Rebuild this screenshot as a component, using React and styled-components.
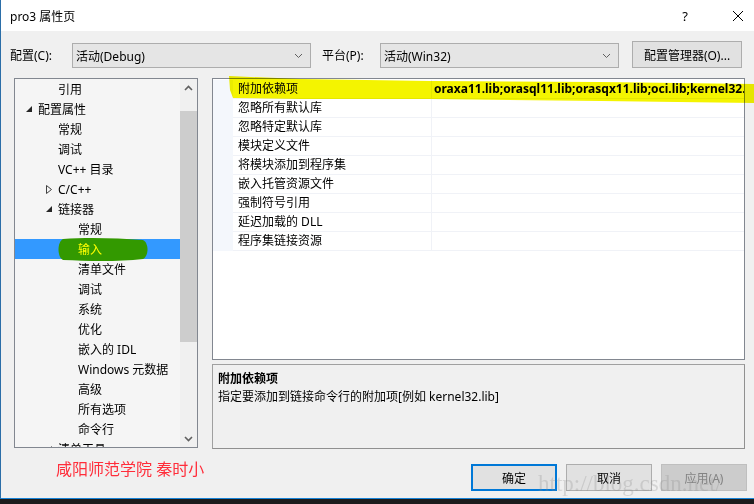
import React from "react";
import styled, {createGlobalStyle} from "styled-components";

const GlobalStyle = createGlobalStyle`
    body {
        margin: 0;
        background: #1c1c1c;
        font-family: "Noto Sans", "Noto Sans CJK SC", sans-serif;
        font-size: 12px;
        color: #000;
        overflow: hidden;
    }
`;

const treeItems = [
    {label: '引用', level: 1},
    {label: '配置属性', level: 0, arrow: 'open'},
    {label: '常规', level: 1},
    {label: '调试', level: 1},
    {label: 'VC++ 目录', level: 1},
    {label: 'C/C++', level: 1, arrow: 'closed'},
    {label: '链接器', level: 1, arrow: 'open'},
    {label: '常规', level: 2},
    {label: '输入', level: 2, selected: true},
    {label: '清单文件', level: 2},
    {label: '调试', level: 2},
    {label: '系统', level: 2},
    {label: '优化', level: 2},
    {label: '嵌入的 IDL', level: 2},
    {label: 'Windows 元数据', level: 2},
    {label: '高级', level: 2},
    {label: '所有选项', level: 2},
    {label: '命令行', level: 2},
    {label: '清单工具', level: 1, arrow: 'open'},
];

const props = [
    {name: '附加依赖项', value: 'oraxa11.lib;orasql11.lib;orasqx11.lib;oci.lib;kernel32.lib;user32.lib'},
    {name: '忽略所有默认库'},
    {name: '忽略特定默认库'},
    {name: '模块定义文件'},
    {name: '将模块添加到程序集'},
    {name: '嵌入托管资源文件'},
    {name: '强制符号引用'},
    {name: '延迟加载的 DLL'},
    {name: '程序集链接资源'},
];

function Arrow({type}) {
    if (type === 'closed') {
        return (
            <svg width="8" height="9" viewBox="0 0 8 9">
                <path d="M1.5 0.5 L6.5 4.5 L1.5 8.5 Z" fill="none" stroke="#404040" strokeWidth="1"/>
            </svg>
        );
    }
    return (
        <svg width="8" height="8" viewBox="0 0 8 8">
            <path d="M7 1 L7 7 L1 7 Z" fill="#262626"/>
        </svg>
    );
}

function Chevron({up}) {
    return (
        <svg width="9" height="6" viewBox="0 0 9 6">
            <path d={up ? "M1 5 L4.5 1.5 L8 5" : "M1 1 L4.5 4.5 L8 1"} fill="none" stroke="#606060" strokeWidth="1.6"/>
        </svg>
    );
}

function DropChevron() {
    return (
        <svg width="9" height="6" viewBox="0 0 9 6">
            <path d="M1 1 L4.5 4.5 L8 1" fill="none" stroke="#606060" strokeWidth="1"/>
        </svg>
    );
}

export default function App() {
    return (
        <>
            <GlobalStyle/>
            <Window>
                <TitleBar>
                    <span>pro3 属性页</span>
                    <TitleButtons>
                        <span>?</span>
                        <CloseGlyph>
                            <svg width="12" height="12" viewBox="0 0 12 12">
                                <path d="M1 1 L11 11 M11 1 L1 11" stroke="#000" strokeWidth="1"/>
                            </svg>
                        </CloseGlyph>
                    </TitleButtons>
                </TitleBar>

                <ConfigRow>
                    <Label>配置(C):</Label>
                    <Select>
                        <span>活动(Debug)</span>
                        <DropChevron/>
                    </Select>
                    <Label>平台(P):</Label>
                    <Select>
                        <span>活动(Win32)</span>
                        <DropChevron/>
                    </Select>
                    <PushButton $width={110} $height={27}>配置管理器(O)...</PushButton>
                </ConfigRow>

                <Main>
                    <Tree>
                        <TreeList>
                            {treeItems.map((item, i) => (
                                <TreeRow key={i} $level={item.level} $selected={item.selected}>
                                    {item.arrow && (
                                        <ArrowSlot $level={item.level}>
                                            <Arrow type={item.arrow}/>
                                        </ArrowSlot>
                                    )}
                                    {item.selected && (
                                        <GreenMark viewBox="0 0 92 25" width="92" height="25">
                                            <path d="M6 2 C30 0 60 1 86 3 C92 6 92 19 86 22 C60 25 30 24 6 23 C0 20 0 5 6 2 Z" fill="#339900"/>
                                        </GreenMark>
                                    )}
                                    <TreeText $selected={item.selected}>{item.label}</TreeText>
                                </TreeRow>
                            ))}
                        </TreeList>
                        <ScrollBar>
                            <ScrollArrow><Chevron up/></ScrollArrow>
                            <Track>
                                <Thumb/>
                            </Track>
                            <ScrollArrow><Chevron/></ScrollArrow>
                        </ScrollBar>
                    </Tree>

                    <RightCol>
                        <Grid>
                            {props.map((p, i) => (
                                <GridRow key={i}>
                                    <Gutter/>
                                    <NameCell>{p.name}</NameCell>
                                    <ValueCell>{p.value}</ValueCell>
                                </GridRow>
                            ))}
                        </Grid>
                        <Description>
                            <DescTitle>附加依赖项</DescTitle>
                            <div>指定要添加到链接命令行的附加项[例如 kernel32.lib]</div>
                        </Description>
                    </RightCol>
                </Main>

                <Footer>
                    <Signature>咸阳师范学院 秦时小</Signature>
                    <ButtonRow>
                        <PushButton $width={86} $height={27} $default>确定</PushButton>
                        <PushButton $width={86} $height={27}>取消</PushButton>
                        <PushButton $width={86} $height={27} $disabled>应用(A)</PushButton>
                    </ButtonRow>
                    <Watermark>http://blog.csdn.net/</Watermark>
                </Footer>

                <YellowMark viewBox="0 0 526 28" width="526" height="28">
                    <path d="M0 0 L72 3 L202 5 L372 6 L526 8 L526 27 L372 25 L202 23 L72 23 L4 22 L1 14 Z" fill="#f4f400"/>
                </YellowMark>
            </Window>
            <Behind/>
        </>
    );
}

const Window = styled.div`
    position: relative;
    width: 754px;
    height: 499px;
    background: #f0f0f0;
    border-left: 1px solid #2b6ea8;
    border-bottom: 1px solid #1883d7;
    box-sizing: border-box;
    display: flex;
    flex-direction: column;
    overflow: hidden;
`;

const Behind = styled.div`
    height: 5px;
    background: #1c1c1c;
`;

const TitleBar = styled.div`
    height: 31px;
    background: #fff;
    display: flex;
    align-items: center;
    justify-content: space-between;
    padding-left: 9px;
    font-size: 12px;
`;

const TitleButtons = styled.div`
    display: flex;
    align-items: center;
    gap: 44px;
    padding-right: 10px;
    font-size: 13px;
`;

const CloseGlyph = styled.span`
    display: flex;
`;

const ConfigRow = styled.div`
    height: 47px;
    display: flex;
    align-items: center;
    padding-left: 9px;
`;

const Label = styled.span`
    width: 62px;
    flex-shrink: 0;
    &:nth-of-type(2) {
        width: 58px;
    }
`;

const Select = styled.div`
    width: 239px;
    height: 25px;
    box-sizing: border-box;
    border: 1px solid #adadad;
    background: #e5e5e5;
    display: flex;
    align-items: center;
    justify-content: space-between;
    padding: 0 7px 0 3px;
    margin-right: 11px;
    margin-top: 2px;
`;

const PushButton = styled.div`
    width: ${p => p.$width}px;
    height: ${p => p.$height}px;
    box-sizing: border-box;
    display: flex;
    align-items: center;
    justify-content: center;
    background: ${p => p.$disabled ? '#cccccc' : '#e1e1e1'};
    border: ${p => p.$default ? '2px solid #0078d7' : p.$disabled ? '1px solid #bfbfbf' : '1px solid #adadad'};
    color: ${p => p.$disabled ? '#838383' : '#000'};
    margin-left: 2px;
`;

const Main = styled.div`
    display: flex;
    padding-left: 13px;
    gap: 14px;
`;

const Tree = styled.div`
    width: 184px;
    height: 370px;
    box-sizing: border-box;
    border: 1px solid #828790;
    background: #f5f5f5;
    display: flex;
    overflow: hidden;
`;

const TreeList = styled.div`
    flex: 1;
    overflow: hidden;
`;

const TreeRow = styled.div`
    position: relative;
    height: 20px;
    display: flex;
    align-items: center;
    padding-left: ${p => 23 + p.$level * 20}px;
    background: ${p => p.$selected ? '#3399ff' : 'transparent'};
`;

const ArrowSlot = styled.span`
    position: absolute;
    left: ${p => 10 + p.$level * 20}px;
    top: 6px;
    display: flex;
`;

const GreenMark = styled.svg`
    position: absolute;
    left: 42px;
    top: -2px;
`;

const TreeText = styled.span`
    position: relative;
    color: ${p => p.$selected ? '#ffff00' : '#000'};
`;

const ScrollBar = styled.div`
    width: 17px;
    display: flex;
    flex-direction: column;
    background: #f0f0f0;
`;

const ScrollArrow = styled.div`
    height: 17px;
    display: flex;
    align-items: center;
    justify-content: center;
`;

const Track = styled.div`
    flex: 1;
    padding-top: 15px;
`;

const Thumb = styled.div`
    height: 231px;
    background: #cdcdcd;
`;

const RightCol = styled.div`
    width: 533px;
    display: flex;
    flex-direction: column;
    gap: 4px;
`;

const Grid = styled.div`
    height: 282px;
    box-sizing: border-box;
    border: 1px solid #828790;
    background: #fff;
    padding-top: 1px;
    overflow: hidden;
`;

const GridRow = styled.div`
    display: flex;
    height: 19px;
`;

const Gutter = styled.div`
    width: 20px;
    flex-shrink: 0;
    background: #f4f7fc;
`;

const NameCell = styled.div`
    width: 193px;
    flex-shrink: 0;
    padding-left: 5px;
    border-bottom: 1px solid #f0f2f7;
    border-right: 1px solid #f0f2f7;
    line-height: 18px;
`;

const ValueCell = styled.div`
    flex: 1;
    padding-left: 2px;
    border-bottom: 1px solid #f0f2f7;
    font-weight: bold;
    line-height: 18px;
    white-space: nowrap;
    overflow: hidden;
`;

const Description = styled.div`
    height: 85px;
    box-sizing: border-box;
    border: 1px solid #a0a0a0;
    border-right-color: #909090;
    border-bottom-color: #909090;
    padding: 5px 5px;
    line-height: 18px;
`;

const DescTitle = styled.div`
    font-weight: bold;
`;

const Footer = styled.div`
    position: relative;
    flex: 1;
    display: flex;
    justify-content: space-between;
    align-items: flex-start;
    padding: 13px 7px 0 55px;
`;

const Signature = styled.div`
    color: #ff2d3a;
    font-size: 16px;
    line-height: 20px;
    margin-top: -3px;
`;

const ButtonRow = styled.div`
    display: flex;
    gap: 7px;
    margin-top: 2px;
`;

const Watermark = styled.div`
    position: absolute;
    left: 537px;
    top: 22px;
    font-family: "Liberation Serif", serif;
    font-size: 23px;
    white-space: nowrap;
    color: rgba(140, 140, 140, 0.28);
    pointer-events: none;
`;

const YellowMark = styled.svg`
    position: absolute;
    left: 228px;
    top: 76px;
    mix-blend-mode: multiply;
`;
